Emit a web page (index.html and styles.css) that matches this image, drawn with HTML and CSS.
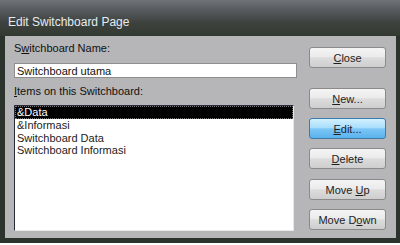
FILE: index.html
```html
<!DOCTYPE html>
<html lang="en">
<head>
  <meta charset="UTF-8" />
  <title>Edit Switchboard Page</title>
  <link rel="stylesheet" href="styles.css">
</head>
<body>

  <div class="window">
    <div class="title-bar">Edit Switchboard Page</div>

    <div class="dialog-body">
      <div class="main-col">
        <div class="field-label">S<u>w</u>itchboard Name:</div>
        <input type="text" class="name-input" value="Switchboard utama" />
        <div class="field-label items-label"><u>I</u>tems on this Switchboard:</div>
        <div class="item-list">
          <div class="item selected">&amp;Data</div>
          <div class="item">&amp;Informasi</div>
          <div class="item">Switchboard Data</div>
          <div class="item">Switchboard Informasi</div>
        </div>
      </div>

      <div class="button-col">
        <button class="dlg-btn close-btn"><u>C</u>lose</button>
        <button class="dlg-btn new-btn"><u>N</u>ew...</button>
        <button class="dlg-btn hot"><u>E</u>dit...</button>
        <button class="dlg-btn"><u>D</u>elete</button>
        <button class="dlg-btn gap-wide">Move <u>U</u>p</button>
        <button class="dlg-btn">Move D<u>o</u>wn</button>
      </div>
    </div>
  </div>

</body>
</html>
```

FILE: styles.css
```css
body {
  margin: 0;
  padding: 0;
  background: #ffffff;
  font-family: "Liberation Sans", Arial, sans-serif;
}

/* outer window frame */
.window {
  width: 400px;
  height: 245px;
  display: flex;
  flex-direction: column;
  background: #2c322c;
  box-sizing: border-box;
  border-bottom: 2px solid #ffffff;
}
.title-bar {
  height: 36px;
  box-sizing: border-box;
  padding: 15px 0 0 8px;
  font-family: "Liberation Sans", Arial, sans-serif;
  font-size: 12px;
  line-height: 15px;
  color: #e4ecf4;
  background: linear-gradient(#707378 0, #55595e 30%, #3e423e 62%, #333a31 100%);
}

.dialog-body {
  flex: 1;
  display: flex;
  margin: 0 4px 5px 5px;
  padding: 6px 10px 7px 9px;
  background: #b6b5b7;
}

/* left column */
.main-col {
  width: 283px;
  display: flex;
  flex-direction: column;
}
.field-label {
  font-size: 11px;
  line-height: 13px;
  color: #111;
}
.items-label {
  margin-top: 7px;
}
.name-input {
  margin-top: 8px;
  width: 283px;
  height: 15px;
  box-sizing: border-box;
  border: 1px solid #8e8e8e;
  padding: 0 0 0 2px;
  font-family: "Liberation Sans", Arial, sans-serif;
  font-size: 11px;
  color: #111;
  background: #fff;
  outline: none;
}
.item-list {
  flex: 1;
  width: 280px;
  margin-top: 7px;
  box-sizing: border-box;
  background: #fff;
  border-top: 1px solid #2a2a3a;
  border-left: 1px solid #2a2a3a;
  border-right: 1px solid #e8e8e8;
  border-bottom: 1px solid #e8e8e8;
}
.item {
  font-size: 11px;
  line-height: 12.5px;
  padding-left: 2px;
  color: #222;
}
.item.selected {
  background: #000;
  color: #fff;
  line-height: 11px;
  border: 1px dotted #777;
  padding-left: 1px;
}

/* buttons */
.button-col {
  margin-left: 12px;
  width: 77px;
  display: flex;
  flex-direction: column;
}
.dlg-btn {
  height: 21px;
  margin-top: 9px;
  padding: 0;
  font-family: "Liberation Sans", Arial, sans-serif;
  font-size: 11px;
  color: #1e1e1e;
  border: 1px solid #8a8a8a;
  border-radius: 3px;
  background: linear-gradient(#f4f4f4 0, #ebebeb 45%, #dcdcdc 52%, #cecece 100%);
}
.dlg-btn.close-btn {
  margin-top: 5px;
}
.dlg-btn.new-btn {
  margin-top: 20px;
}
.dlg-btn.gap-wide {
  margin-top: 10px;
}
.dlg-btn.hot {
  border-color: #3d7bab;
  background: linear-gradient(#d2f0fe 0, #a9defc 45%, #7cc6f6 52%, #5ab2ec 100%);
}
```
